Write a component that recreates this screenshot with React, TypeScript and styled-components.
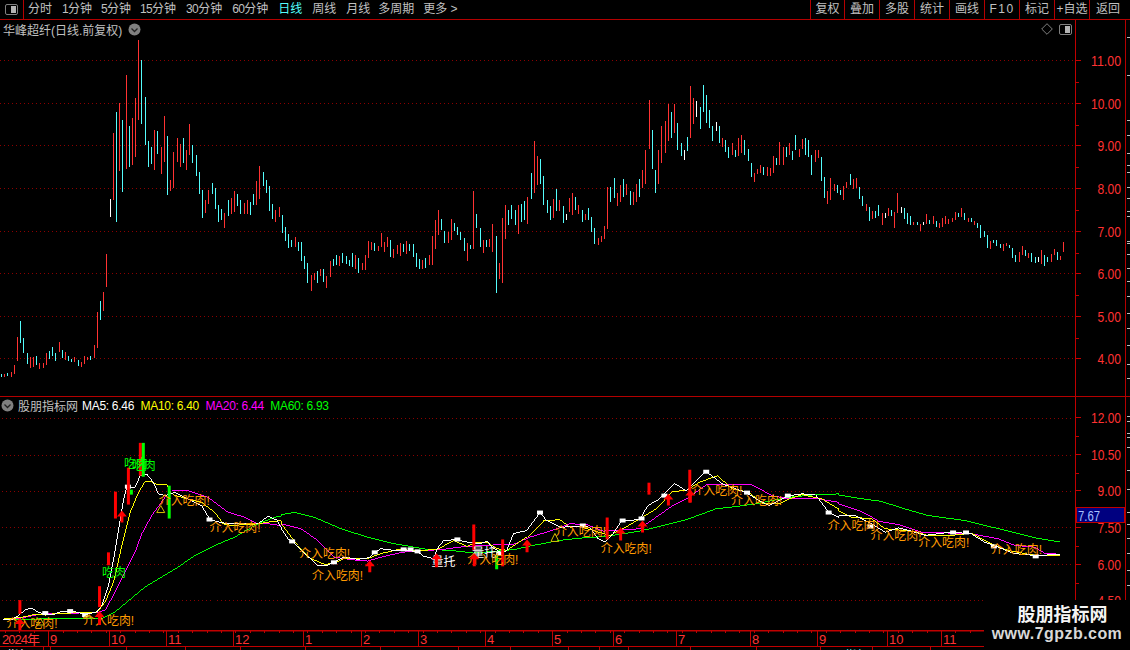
import React from "react";
import styled, { createGlobalStyle } from "styled-components";

const CJK = `"Liberation Sans", "Noto Sans CJK SC", sans-serif`;
const LINE = "#b40000";
const AXIS_RED = "#ff3232";

const GlobalStyle = createGlobalStyle`
  html, body { margin: 0; padding: 0; background: #000; }
  #root { width: 1130px; height: 650px; }
`;

const Page = styled.div`
  position: relative;
  width: 1130px;
  height: 650px;
  overflow: hidden;
  background: #000;
  color: #c0c0c0;
  font: 12px ${CJK};
  display: flex;
  flex-direction: column;
`;

const Toolbar = styled.header`
  flex: 0 0 20px;
  box-sizing: border-box;
  height: 20px;
  display: flex;
  align-items: stretch;
  justify-content: space-between;
  border-bottom: 1px solid ${LINE};
`;
const ToolbarLeft = styled.div`
  display: flex;
  align-items: center;
`;
const ToggleCell = styled.div`
  width: 23px;
  height: 19px;
  display: flex;
  align-items: center;
  justify-content: center;
  border-right: 1px solid ${LINE};
  margin-right: 4px;
`;
const Tabs = styled.nav`
  display: flex;
  align-items: center;
  gap: 10px;
  line-height: 19px;
`;
const Tab = styled.span<{ $active?: boolean; $pull?: number }>`
  white-space: nowrap;
  margin-left: ${(p) => -(p.$pull ?? 0)}px;
  color: ${(p) => (p.$active ? "#54fcfc" : "#c0c0c0")};
`;
const Num = styled.span`
  letter-spacing: -0.67px;
`;
const Actions = styled.div`
  display: flex;
  padding-right: 4px;
`;
const ActionButton = styled.div<{ $w: number; $spaced?: boolean }>`
  width: ${(p) => p.$w}px;
  box-sizing: border-box;
  border-left: 1px solid ${LINE};
  text-align: center;
  line-height: 19px;
  white-space: nowrap;
  letter-spacing: ${(p) => (p.$spaced ? "1.5px" : "0")};
`;

const Pane = styled.section<{ $h: number; $rule?: boolean }>`
  flex: 0 0 ${(p) => p.$h}px;
  box-sizing: border-box;
  height: ${(p) => p.$h}px;
  display: flex;
  border-bottom: ${(p) => (p.$rule ? `1px solid ${LINE}` : "none")};
`;
const Plot = styled.div`
  width: 1075px;
  display: flex;
  flex-direction: column;
`;
const TitleRow = styled.div<{ $h: number }>`
  flex: 0 0 ${(p) => p.$h}px;
  display: flex;
  align-items: center;
  gap: 4px;
`;
const PaneTitle = styled.span<{ $pad: number; $after?: number }>`
  display: flex;
  padding-left: ${(p) => p.$pad}px;
  margin-right: ${(p) => p.$after ?? 0}px;
  white-space: nowrap;
`;
const TitleActions = styled.div`
  margin-left: auto;
  margin-right: 3px;
  display: flex;
  align-items: center;
  gap: 6px;
`;
const Legend = styled.span<{ $c: string }>`
  color: ${(p) => p.$c};
  letter-spacing: -0.3px;
  white-space: nowrap;
`;
const Legends = styled.div`
  display: flex;
  gap: 6.5px;
`;
const Chart = styled.svg`
  display: block;
  flex: 1 1 auto;
`;
const AxisSvg = styled.svg`
  display: block;
`;
const TimeAxis = styled.svg`
  display: block;
  flex: 0 0 20px;
`;
const Watermark = styled.aside`
  position: absolute;
  right: 0;
  bottom: 0;
  width: 146px;
  height: 50px;
  background: #000;
  display: flex;
  flex-direction: column;
  align-items: center;
  color: #fff;
  font-weight: bold;
`;
const WatermarkName = styled.div`
  margin-top: 4px;
  margin-left: 11px;
  font-size: 18px;
  line-height: 22px;
  color: #f4f4f4;
`;
const WatermarkUrl = styled.div`
  margin-top: -2px;
  font: bold 16px "Liberation Sans", sans-serif;
  letter-spacing: 0.45px;
  line-height: 20px;
  color: #d8d8d8;
`;

type P = [number, number];
type C = [number, number, number, number];
const COL = ["#ff3232", "#54fcfc", "#ffffff"];

/* Coordinates were read at 3x from sections of the chart: [originX, originY, data] */
const candleSets: [number, number, C[]][] = [
  [0, 230, [[4,433,441,1],[13,433,441,0],[22,430,438,1],[34,427,441,0],[43,405,432,0],[52,321,393,0],[61,273,339,1],[70,324,369,1],[82,369,402,1],[91,381,414,0],[100,381,411,0],[109,378,405,1],[118,399,417,0],[130,399,414,0],[139,369,405,0],[148,363,387,1],[157,351,378,1],[166,369,393,1],[178,336,366,0],[187,360,384,1],[196,366,390,0],[205,378,393,1],[214,387,396,1],[223,381,396,0],[235,390,408,1],[244,396,411,0],[253,378,402,0],[262,381,390,0],[271,378,390,1],[283,345,384,0],[292,246,354,0],[301,213,270,1],[310,186,243,0],[319,72,171,0]]],
  [0, 40, [[331,477,531,2],[340,279,480,0],[349,216,546,1],[358,189,393,0],[367,240,456,1],[379,105,387,0],[388,258,381,1],[397,234,375,0],[406,174,351,0],[415,0,240,0],[424,60,252,1],[436,171,315,1],[445,303,381,1],[454,321,372,1],[463,270,390,0],[472,273,342,1],[484,321,402,0],[493,228,366,0],[502,288,465,1],[511,420,453,0],[520,336,445,0],[532,294,366,0],[541,312,381,0],[550,294,369,1],[559,330,390,0],[568,252,345,0],[577,315,369,1],[589,345,408,1],[598,396,462,1],[607,450,534,1],[616,480,519,0],[625,450,492,0],[637,429,462,1],[646,444,507,1],[655,495,546,1],[664,507,540,1],[673,519,564,0],[685,480,528,1],[694,474,522,0],[703,453,516,0],[712,462,498,1],[721,480,522,1],[733,489,522,0],[742,480,522,0],[751,486,525,1],[760,462,495,1],[769,423,495,0],[778,378,477,0],[790,396,438,1],[799,420,459,1],[808,438,513,1],[817,492,537,1],[826,510,546,0],[838,501,531,0]]],
  [280, 120, [[7,285,339,1],[16,321,363,1],[25,342,384,1],[34,360,381,1],[46,351,381,0],[55,366,393,1],[64,366,423,1],[73,408,447,1],[82,429,489,1],[94,465,513,0],[103,459,480,0],[112,453,489,1],[121,447,468,0],[130,447,486,1],[139,468,504,0],[151,423,471,0],[160,417,438,1],[169,405,435,1],[178,408,438,0],[187,399,429,1],[199,408,432,1],[208,420,438,1],[217,399,441,1],[226,405,447,0],[235,414,459,1],[247,429,450,0],[256,405,450,0],[265,363,414,0],[274,366,390,0],[283,369,393,1],[295,378,393,0],[304,339,381,0],[313,366,396,0],[322,351,381,0],[331,360,411,1],[340,387,414,0],[352,375,402,0],[361,369,408,0],[370,372,396,1],[379,363,402,0],[388,372,393,1],[400,372,411,1],[409,399,441,1],[418,417,447,1],[427,420,447,0],[436,414,444,1],[448,405,435,0],[457,348,435,0],[466,300,387,0],[475,270,345,0],[484,297,330,1],[493,333,369,1],[505,336,369,0],[514,297,360,0],[523,309,333,1],[532,321,345,1],[541,336,360,1],[553,354,393,1],[562,369,423,0],[571,375,387,1],[580,213,387,0],[589,282,324,1],[601,324,381,1],[610,360,399,0],[619,360,381,1],[628,357,381,0],[637,312,396,0],[649,348,519,1],[658,429,477,0],[667,294,489,0],[676,255,357,0],[685,270,315,1],[694,255,297,1],[706,270,315,1],[715,255,342,0],[724,252,306,1],[733,243,300,1],[742,231,312,0],[754,159,237,1],[763,63,219,0],[772,108,195,0],[781,117,192,1],[790,168,255,1],[802,240,279,1],[811,258,300,1],[820,237,294,0],[829,207,273,1],[838,240,273,0]]],
  [560, 70, [[10,408,459,1],[19,432,450,2],[28,384,426,0],[37,369,435,0],[46,381,420,1],[55,405,432,0],[67,420,456,1],[76,432,450,0],[85,414,450,1],[94,441,486,1],[103,474,522,1],[115,504,525,0],[124,498,516,0],[133,468,507,0],[142,351,477,0],[151,351,396,1],[163,324,384,1],[172,369,408,0],[181,345,396,0],[190,327,381,1],[199,342,375,0],[211,363,405,1],[220,366,405,0],[229,342,396,0],[238,327,381,1],[247,300,354,0],[256,240,342,0],[268,90,237,0],[277,180,297,1],[286,300,369,1],[295,240,342,0],[304,168,279,0],[316,153,249,0],[325,102,213,0],[334,126,204,1],[343,102,189,0],[352,159,240,1],[364,219,258,1],[373,240,270,2],[382,201,243,1],[391,48,204,0],[400,84,162,0],[409,93,141,2],[421,111,177,1],[430,45,126,1],[439,75,159,1],[448,120,174,1],[457,168,213,1],[469,156,183,2],[478,168,219,1],[487,204,231,0],[496,210,246,1],[505,231,264,1],[517,219,255,0],[526,240,261,1],[535,204,258,0],[544,195,249,0],[553,210,255,1],[565,237,273,1],[574,279,321,1],[583,309,336,0],[592,297,312,0],[601,285,309,0],[610,291,315,1],[622,291,318,0],[631,294,318,0],[640,258,309,0],[649,264,285,1],[658,216,285,0],[670,231,285,0],[679,231,261,1],[688,219,255,0],[697,243,270,1],[706,195,240,1],[718,237,261,0],[727,207,237,0],[736,204,255,1],[745,210,261,1],[754,255,315,1],[766,240,276,0],[775,240,264,0],[784,261,333,1],[793,321,384,1],[802,363,402,0],[811,324,390,0],[823,342,363,0],[832,345,369,1]]],
  [840, 120, [[1,210,225,1],[10,198,240,0],[19,186,204,0],[31,162,195,1],[40,177,207,0],[49,174,204,0],[58,201,237,1],[67,228,258,1],[79,252,273,0],[88,261,303,1],[97,273,297,0],[106,273,294,1],[115,255,288,1],[127,279,315,0],[136,279,294,2],[145,264,288,0],[154,270,288,1],[163,276,324,0],[172,219,279,0],[184,261,279,2],[193,264,297,1],[202,279,312,1],[211,288,315,1],[220,306,315,0],[232,306,315,1],[241,312,333,0],[250,306,315,2],[259,282,312,0],[268,300,312,1],[280,288,312,0],[289,303,321,1],[298,309,324,0],[307,294,321,0],[316,288,312,0],[325,297,312,0],[337,294,306,0],[346,276,300,0],[355,279,291,1],[364,264,291,0],[373,279,300,1],[385,294,306,0],[394,294,306,1],[403,303,315,0],[412,309,324,1],[421,315,354,1],[433,333,351,1],[442,345,384,1],[451,363,387,0],[460,360,369,1],[469,360,378,1],[481,372,384,1],[490,372,393,0],[499,369,378,0],[508,375,384,1],[517,384,414,1],[526,405,426,1],[538,396,426,0],[547,378,405,0],[556,390,408,1],[565,399,414,0],[574,399,426,1],[586,411,429,1],[595,411,426,2],[604,390,432,0],[613,405,438,1],[622,411,426,1],[634,402,426,0],[643,387,405,0],[652,396,420,1],[661,408,420,0],[670,366,396,0]]],
];
const candles = candleSets.flatMap(([x0, y0, list]) =>
  list.map(([x, t, b, c]) => ({ x: Math.floor(x0 + x / 3), y: y0 + t / 3, h: (b - t) / 3, c: COL[c] }))
);

const ORIGINS: P[] = [[0, 395], [280, 470], [560, 440], [840, 400]];
const toLine = (sections: P[][]) =>
  sections
    .flatMap((pts, i) => pts.map(([x, y]) => `${(ORIGINS[i][0] + x / 3).toFixed(1)},${(ORIGINS[i][1] + y / 3).toFixed(1)}`))
    .join(" ");

const LINES: { c: string; d: string }[] = [
  {
    c: "#00ff00",
    d: toLine([
      [[3,673],[300,670],[340,650],[400,600],[430,575],[530,515],[580,480],[640,450],[700,425],[770,385],[820,365],[840,362]],
      [[0,133],[40,125],[100,140],[180,175],[260,200],[340,220],[440,237],[510,240],[580,248],[700,238],[760,225],[840,210]],
      [[0,300],[60,293],[140,288],[240,272],[300,258],[380,238],[470,205],[530,198],[590,190],[690,170],[770,162],[840,160]],
      [[0,283],[60,293],[130,303],[200,325],[270,345],[380,360],[470,382],[590,412],[668,425]],
    ]),
  },
  {
    c: "#ff00ff",
    d: toLine([
      [[20,675],[60,668],[100,660],[140,655],[285,653],[310,645],[340,590],[370,530],[400,470],[420,415],[450,360],[490,305],[510,285],[560,285],[620,305],[680,350],[730,365],[770,385],[800,385],[840,390]],
      [[0,160],[60,175],[110,210],[160,260],[210,268],[260,272],[310,258],[370,245],[440,240],[480,238],[540,230],[600,225],[700,222],[750,200],[800,185],[840,172]],
      [[0,262],[30,250],[80,252],[130,272],[190,268],[240,265],[290,230],[340,195],[390,170],[440,133],[580,133],[640,165],[690,175],[780,175],[840,185]],
      [[0,310],[60,330],[120,362],[180,372],[250,395],[400,400],[480,415],[530,435],[590,440],[620,458],[668,462]],
    ]),
  },
  {
    c: "#ffff00",
    d: toLine([
      [[3,672],[50,668],[100,658],[130,660],[160,655],[285,652],[310,620],[335,560],[360,450],[385,350],[410,290],[430,257],[450,258],[470,268],[495,266],[505,290],[520,300],[600,320],[640,350],[665,385],[690,390],[770,385],[800,380],[840,375]],
      [[0,160],[50,225],[90,265],[130,282],[160,280],[190,265],[260,265],[300,250],[350,238],[410,240],[470,238],[520,210],[560,228],[590,215],[620,215],[650,235],[680,240],[740,200],[790,150],[840,148]],
      [[0,238],[30,260],[60,258],[100,270],[150,285],[190,265],[240,235],[290,205],[340,152],[380,150],[420,125],[475,105],[520,145],[570,155],[610,188],[660,190],[690,175],[730,162],[790,175],[840,205]],
      [[0,330],[40,350],[100,355],[140,385],[220,392],[270,405],[340,405],[400,398],[460,430],[510,450],[590,465],[668,465]],
    ]),
  },
  {
    c: "#ffffff",
    d: toLine([
      [[3,672],[30,672],[50,660],[70,643],[90,640],[105,650],[125,656],[150,660],[175,650],[210,648],[250,658],[285,650],[300,630],[320,570],[335,490],[350,400],[365,310],[375,275],[400,275],[415,240],[435,235],[455,260],[470,295],[490,300],[520,290],[600,330],[625,372],[660,382],[690,385],[770,385],[800,362],[830,375],[840,395]],
      [[0,175],[20,205],[35,213],[60,240],[110,285],[140,285],[160,275],[190,260],[230,267],[265,262],[285,245],[300,235],[340,240],[370,240],[410,243],[430,258],[460,265],[470,235],[490,210],[530,208],[560,215],[600,220],[620,212],[640,235],[665,250],[680,240],[700,190],[740,180],[780,127],[800,150],[840,170]],
      [[0,260],[65,258],[90,260],[115,295],[135,305],[155,285],[185,240],[240,238],[265,195],[300,175],[345,128],[380,150],[400,130],[440,92],[490,130],[560,155],[600,180],[630,195],[660,180],[690,165],[730,160],[770,162],[810,215],[840,230]],
      [[0,345],[50,345],[100,370],[140,395],[180,382],[230,395],[260,405],[340,395],[400,400],[440,425],[480,440],[530,460],[590,465],[668,463]],
    ]),
  },
];

const SQUARES: P[] = [[43,613],[68,611],[83,615],[126,486],[208,519],[291,541],[333,562],[374,552],[403,549],[410,549],[417,551],[457,539],[499,553],[540,512],[583,525],[623,520],[642,518],[665,495],[707,471],[748,492],[789,495],[830,512],[872,526],[955,532],[968,532],[996,546],[1038,556]];
const BARS: [number, number, number, string][] = [
  [16,600,614,"#ff0000"],[96,586,607,"#ff0000"],[105,552,565,"#ff0000"],[112,491,518,"#ff0000"],[125,467,504,"#ff0000"],[137,442,475,"#ff0000"],
  [140,442,476,"#00ff00"],[166,485,518,"#00ff00"],[128,489,494,"#00ff00"],
  [472,524,550,"#ff0000"],[495,555,569,"#00ff00"],[501,539,566,"#ff0000"],[606,517,539,"#ff0000"],[648,482,494,"#ff0000"],[689,469,502,"#ff0000"],
];
const ARROWS: [number, number, number][] = [[17.5,618,630],[97.5,611,625],[120,510,522],[369,560,572],[436,553,567],[474,553,566],[527,539,552],[621,527,540],[643,520,532],[669,493,505],[691,489,502]];
const TRIANGLES: [number, number, number][] = [[38,618,625],[85,615,618],[159,505,512],[555,533,541]];
const ENTRIES: P[] = [[4,624],[81,621],[157,500],[208,528],[298,554],[311,576],[467,560],[555,532],[601,549],[692,490],[732,500],[829,526],[872,536],[920,543],[993,550]];
const GREEN_LABELS: P[] = [[122,463],[130,465],[100,573]];
const WHITE_LABELS: P[] = [[431,562],[472,553]];

const MAIN_GRID = [60.5, 103.5, 145.5, 188.5, 231.5, 273.5, 316.5, 358.5];
const MAIN_LABELS = ["11.00", "10.00", "9.00", "8.00", "7.00", "6.00", "5.00", "4.00"];
const SUB_GRID = [417.5, 454.5, 490.5, 527.5, 564.5, 600.5];
const SUB_LABELS = ["12.00", "10.50", "9.00", "7.50", "6.00", "4.50"];
const EDGE_TICKS = [37, 75, 120, 135, 153, 165, 172, 187, 198, 211, 216, 241, 243, 254, 268, 281, 296, 313, 328, 345, 364, 378, 416, 421, 433, 437, 447, 470, 489, 512, 524, 538, 553, 570, 585];
const MONTHS: [number, string][] = [[48,"9"],[109,"10"],[166,"11"],[233,"12"],[303,"1"],[361,"2"],[418,"3"],[485,"4"],[552,"5"],[613,"6"],[676,"7"],[750,"8"],[817,"9"],[887,"10"],[941,"11"]];
const TICKS = Array.from({ length: 69 }, (_, i) => Math.round(5 + i * 14.4));
const STRIP_TICKS = [43, 50, 126, 185, 240, 305, 380, 458, 510, 568, 599, 628, 690, 756, 820, 872, 930];

const Grid = ({ ys }: { ys: number[] }) => (
  <g stroke="#8c0000" strokeDasharray="1 3" shapeRendering="crispEdges">
    {ys.map((y) => (
      <line key={y} x1={0} x2={1075} y1={y} y2={y} />
    ))}
  </g>
);

const ToggleIcon = () => (
  <svg width="13" height="11" viewBox="0 0 13 11">
    <rect x="0.5" y="0.5" width="12" height="10" rx="1.5" fill="#000" stroke="#808080" />
    <rect x="6" y="2" width="5" height="7" fill="#b4b4b4" />
  </svg>
);
const Chevron = () => (
  <svg width="13" height="13" viewBox="0 0 13 13">
    <circle cx="6.5" cy="6.5" r="6" fill="#808080" />
    <path d="M3.5 5.5 L6.5 8.5 L9.5 5.5" fill="none" stroke="#222" strokeWidth="1.3" />
  </svg>
);
const Diamond = () => (
  <svg width="12" height="12" viewBox="0 0 12 12">
    <path d="M6 0.7 L11.3 6 L6 11.3 L0.7 6 Z" fill="none" stroke="#808080" />
  </svg>
);

const Axis = ({ top, h, grid, labels, price }: { top: number; h: number; grid: number[]; labels: string[]; price?: boolean }) => (
  <AxisSvg width="55" height={h} viewBox={`1075 ${top} 55 ${h}`}>
    <rect x={1075} y={top} width={1} height={h} fill="#c00000" />
    <rect x={1125} y={top} width={1} height={h} fill="#b40000" />
    {grid.map((y, i) => (
      <g key={y}>
        <rect x={1076} y={y - 0.5} width={5} height={1} fill="#c80000" />
        {i < grid.length - 1 && <rect x={1076} y={Math.round((y + grid[i + 1]) / 2)} width={3} height={1} fill="#c00000" />}
        <text x={1121} y={y + 0.5} fill={AXIS_RED} fontSize="14" fontFamily="Liberation Sans" textAnchor="end" dominantBaseline="central" textLength={labels[i].length === 5 ? 30 : 23.5} lengthAdjust="spacingAndGlyphs">
          {labels[i]}
        </text>
      </g>
    ))}
    {EDGE_TICKS.filter((y) => y >= top && y < top + h).map((y) => (
      <rect key={y} x={1127} y={y} width={3} height={1} fill="#bdbdbd" />
    ))}
    {price && (
      <g>
        <rect x={1076.5} y={507.5} width={48} height={15} fill="#000080" stroke="#c00000" />
        <text x={1078} y={515.5} fill="#a8c0ff" fontSize="14" fontFamily="Liberation Sans" dominantBaseline="central" textLength={22} lengthAdjust="spacingAndGlyphs">7.67</text>
      </g>
    )}
  </AxisSvg>
);

const TAB_ITEMS: { label: React.ReactNode; active?: boolean; pull?: number }[] = [
  { label: "分时" },
  { label: <><Num>1</Num>分钟</> },
  { label: <><Num>5</Num>分钟</>, pull: 1 },
  { label: <><Num>15</Num>分钟</>, pull: 1 },
  { label: <><Num>30</Num>分钟</> },
  { label: <><Num>60</Num>分钟</> },
  { label: "日线", active: true },
  { label: "周线" },
  { label: "月线" },
  { label: "多周期", pull: 2 },
  { label: "更多 >", pull: 1 },
];
const ACTIONS: [string, number, boolean?][] = [["复权",34],["叠加",35],["多股",35],["统计",35],["画线",35],["F10",35,true],["标记",35],["+自选",35],["返回",37]];

export default function App() {
  return (
    <Page>
      <GlobalStyle />
      <Toolbar>
        <ToolbarLeft>
          <ToggleCell><ToggleIcon /></ToggleCell>
          <Tabs>
            {TAB_ITEMS.map((t, i) => (
              <Tab key={i} $active={t.active} $pull={t.pull}>{t.label}</Tab>
            ))}
          </Tabs>
        </ToolbarLeft>
        <Actions>
          {ACTIONS.map(([label, w, spaced]) => (
            <ActionButton key={label} $w={w} $spaced={spaced}>{label}</ActionButton>
          ))}
        </Actions>
      </Toolbar>

      <Pane $h={377} $rule>
        <Plot>
          <TitleRow $h={18}>
            <PaneTitle $pad={3} $after={2}>华峰超纤(日线.前复权)</PaneTitle>
            <Chevron />
            <TitleActions>
              <Diamond />
              <ToggleIcon />
            </TitleActions>
          </TitleRow>
          <Chart width="1075" height="358" viewBox="0 38 1075 358">
            <Grid ys={MAIN_GRID} />
            {candles.map((k, i) => (
              <rect key={i} x={k.x} y={k.y} width={1} height={k.h} fill={k.c} shapeRendering="crispEdges" />
            ))}
          </Chart>
        </Plot>
        <Axis top={20} h={376} grid={MAIN_GRID} labels={MAIN_LABELS} />
      </Pane>

      <Pane $h={233}>
        <Plot>
          <TitleRow $h={16}>
            <PaneTitle $pad={1}><Chevron /></PaneTitle>
            <span>股朋指标网</span>
            <Legends>
              <Legend $c="#ffffff">MA5: 6.46</Legend>
              <Legend $c="#ffff00">MA10: 6.40</Legend>
              <Legend $c="#ff00ff">MA20: 6.44</Legend>
              <Legend $c="#00ff00">MA60: 6.93</Legend>
            </Legends>
          </TitleRow>
          <Chart width="1075" height="217" viewBox="0 413 1075 217">
            <Grid ys={SUB_GRID} />
            {LINES.map((l) => (
              <polyline key={l.c} points={l.d} fill="none" stroke={l.c} strokeWidth="1" shapeRendering="crispEdges" />
            ))}
            {SQUARES.map(([x, y]) => (
              <rect key={`${x}-${y}`} x={x - 3} y={y - 2} width={6} height={4} fill="#fff" />
            ))}
            {TRIANGLES.map(([x, t, b]) => (
              <path key={x} d={`M${x} ${t} L${x + 4} ${b} L${x - 4} ${b} Z`} fill="none" stroke="#d8c000" />
            ))}
            {BARS.map(([x, t, b, c]) => (
              <rect key={`${x}-${t}`} x={x} y={t} width={3} height={b - t} fill={c} />
            ))}
            {GREEN_LABELS.map(([x, y]) => (
              <text key={x} x={x} y={y} fill="#00ff00" fontSize="12" dominantBaseline="central" fontFamily={CJK}>吃肉</text>
            ))}
            {WHITE_LABELS.map(([x, y]) => (
              <text key={x} x={x} y={y} fill="#ffffff" fontSize="12" dominantBaseline="central" fontFamily={CJK}>量托</text>
            ))}
            {ENTRIES.map(([x, y]) => (
              <text key={x} x={x} y={y} fill="#ff9a00" fontSize="12" dominantBaseline="central" fontFamily={CJK}>介入吃肉!</text>
            ))}
            {ARROWS.map(([x, t, b]) => (
              <path key={x} d={`M${x} ${t} L${x + 5} ${t + 6} L${x + 1.5} ${t + 6} L${x + 1.5} ${b} L${x - 1.5} ${b} L${x - 1.5} ${t + 6} L${x - 5} ${t + 6} Z`} fill="#ff0000" />
            ))}
          </Chart>
        </Plot>
        <Axis top={397} h={233} grid={SUB_GRID} labels={SUB_LABELS} price />
      </Pane>

      <TimeAxis width="1130" height="20" viewBox="0 630 1130 20">
        <rect x={0} y={630} width={984} height={1.5} fill="#c00000" />
        <rect x={0} y={646} width={984} height={1} fill="#c00000" />
        {TICKS.map((x) => (
          <rect key={x} x={x} y={631} width={1} height={2} fill="#c00000" />
        ))}
        {STRIP_TICKS.map((x) => (
          <rect key={x} x={x} y={647} width={1} height={3} fill="#c00000" />
        ))}
        <text x={7} y={660} fill="#fff" fontSize="12" fontFamily={CJK}>指标</text>
        <text x={845} y={660} fill="#54fcfc" fontSize="12" fontFamily={CJK}>指标</text>
        <text x={2} y={639} fill={AXIS_RED} fontSize="13" dominantBaseline="central" fontFamily={CJK} textLength={38}>2024年</text>
        {MONTHS.map(([x, m]) => (
          <g key={x}>
            <rect x={x} y={631} width={1} height={15} fill="#c00000" />
            <text x={x + 2} y={639} fill={AXIS_RED} fontSize="13" dominantBaseline="central" fontFamily="Liberation Sans">{m}</text>
          </g>
        ))}
      </TimeAxis>

      <Watermark>
        <WatermarkName>股朋指标网</WatermarkName>
        <WatermarkUrl>www.7gpzb.com</WatermarkUrl>
      </Watermark>
    </Page>
  );
}
